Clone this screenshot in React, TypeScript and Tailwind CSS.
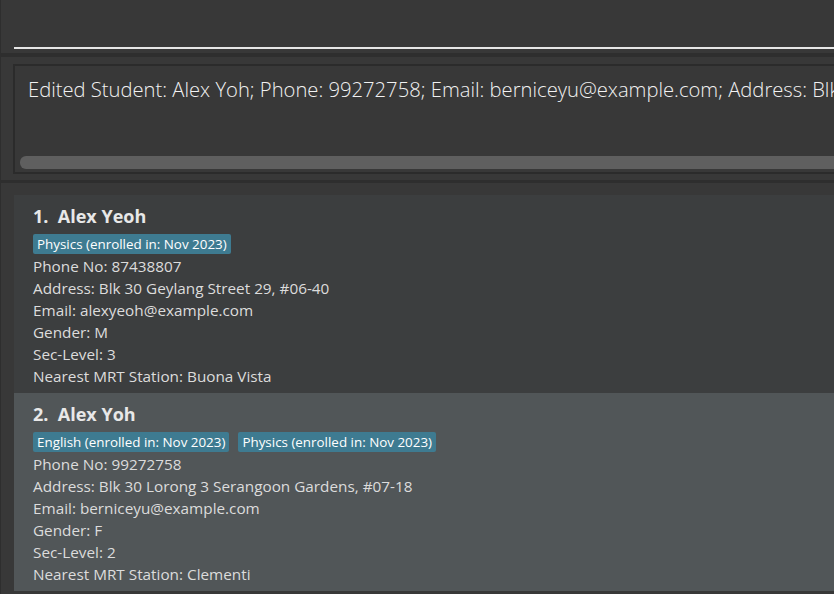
import React from 'react';

interface Student {
  name: string;
  tags: string[];
  phone: string;
  address: string;
  email: string;
  gender: string;
  level: string;
  mrt: string;
}

const students: Student[] = [
  {
    name: 'Alex Yeoh',
    tags: ['Physics (enrolled in: Nov 2023)'],
    phone: '87438807',
    address: 'Blk 30 Geylang Street 29, #06-40',
    email: 'alexyeoh@example.com',
    gender: 'M',
    level: '3',
    mrt: 'Buona Vista',
  },
  {
    name: 'Alex Yoh',
    tags: ['English (enrolled in: Nov 2023)', 'Physics (enrolled in: Nov 2023)'],
    phone: '99272758',
    address: 'Blk 30 Lorong 3 Serangoon Gardens, #07-18',
    email: 'berniceyu@example.com',
    gender: 'F',
    level: '2',
    mrt: 'Clementi',
  },
];

const font = { fontFamily: '"Open Sans", "Noto Sans", sans-serif' };

const StudentCard = ({ s, idx }: { s: Student; idx: number }) => (
  <div className={`h-[198px] pl-[19px] pt-[8px] ${idx % 2 === 0 ? 'bg-[#3c3e3f]' : 'bg-[#515658]'}`}>
    <div className="text-[18px] font-bold text-[#e8e8e8] leading-[26px] whitespace-nowrap">
      {idx + 1}.&nbsp;&nbsp;{s.name}
    </div>
    <div className="flex gap-[9px] mt-[5px]">
      {s.tags.map((t) => (
        <span key={t} className="bg-[#3e7b91] text-white text-[13.4px] leading-[20px] px-[4px] rounded-[2px] whitespace-nowrap">
          {t}
        </span>
      ))}
    </div>
    <div className="mt-[1px] text-[15.3px] text-[#dcdcdc] leading-[22px] whitespace-nowrap">
      <div>Phone No: {s.phone}</div>
      <div>Address: {s.address}</div>
      <div>Email: {s.email}</div>
      <div>Gender: {s.gender}</div>
      <div>Sec-Level: {s.level}</div>
      <div>Nearest MRT Station: {s.mrt}</div>
    </div>
  </div>
);

export default function App() {
  return (
    <div className="w-[834px] h-[594px] bg-[#383838] overflow-hidden flex flex-col border-l border-[#2e2e2e]" style={font}>
      {/* Command box */}
      <div className="h-[53px] pl-[13px] flex flex-col justify-end shrink-0">
        <div className="h-[2px] bg-[#e6e6e6] mb-[4px]" />
      </div>
      <div className="h-[4px] bg-[#2e2e2e] shrink-0" />

      {/* Result display */}
      <div className="h-[123px] pl-[12px] pt-[7px] shrink-0">
        <div className="h-[110px] border-2 border-r-0 border-[#2b2b2b] flex flex-col overflow-hidden">
          <div className="pl-[13px] pt-[9px] text-[20.2px] font-light text-[#f2f2f2] whitespace-nowrap leading-[28px] flex-1">
            Edited Student: Alex Yoh; Phone: 99272758; Email: berniceyu@example.com; Address: Blk 30 Lorong 3 Serangoon Gardens, #07-18
          </div>
          <div className="h-[16px] pl-[5px] pb-[3px] flex">
            <div className="flex-1 h-[13px] bg-[#5f5f5f] rounded-l-[6px]" />
          </div>
        </div>
      </div>
      <div className="h-[3px] bg-[#2e2e2e] shrink-0" />

      {/* Student list */}
      <div className="flex-1 pl-[13px] pt-[12px] overflow-hidden">
        {students.map((s, i) => (
          <StudentCard key={s.name} s={s} idx={i} />
        ))}
      </div>
    </div>
  );
}
